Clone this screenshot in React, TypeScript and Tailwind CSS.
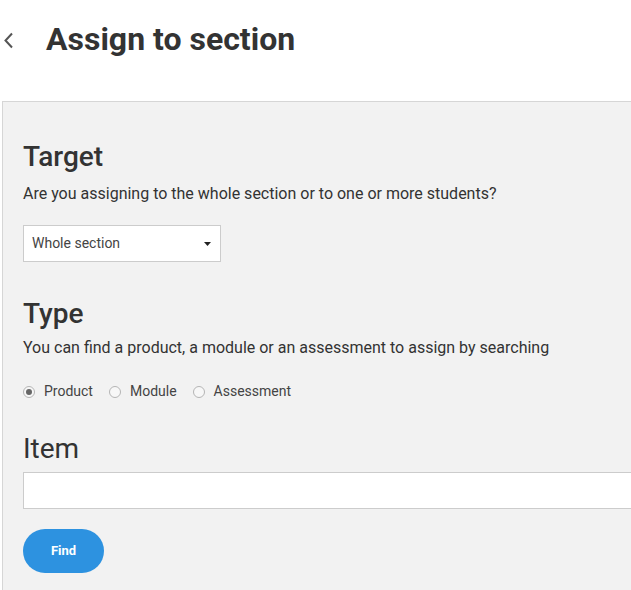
import React, { useState } from "react";

const OPTIONS = ["Product", "Module", "Assessment"];

export default function App() {
  const [type, setType] = useState("Product");

  return (
    <div
      className="min-h-[590px] bg-white text-[#333]"
      style={{ fontFamily: "Roboto, 'Noto Sans', sans-serif" }}
    >
      {/* Header */}
      <div className="flex h-[101px] items-start">
        <button className="ml-[2px] mt-[31px] flex h-[18px] w-[12px] items-center justify-center text-[#555]">
          <svg width="11" height="17" viewBox="0 0 11 17" fill="none">
            <path d="M9 1.5 L2.5 8.5 L9 15.5" stroke="currentColor" strokeWidth="2" />
          </svg>
        </button>
        <h1 className="ml-[32px] mt-[20px] text-[32px] font-bold leading-[38px] text-[#333]">
          Assign to section
        </h1>
      </div>

      {/* Panel */}
      <div className="ml-[2px] border-l border-t border-[#d6d6d6] bg-[#f2f2f2] pb-[20px] pl-[20px]">
        <h2 className="pt-[38px] text-[28px] font-medium leading-[34px] text-[#333]">Target</h2>
        <p className="mt-[10px] text-[16px] leading-[20px] text-[#333]">
          Are you assigning to the whole section or to one or more students?
        </p>
        <div className="mt-[21px] flex h-[37px] w-[198px] items-center justify-between border border-[#ccc] bg-white pl-[8px] pr-[9px]">
          <span className="text-[14px] text-[#444]">Whole section</span>
          <svg width="7" height="4" viewBox="0 0 7 4">
            <path d="M0 0 H7 L3.5 4 Z" fill="#222" />
          </svg>
        </div>

        <h2 className="mt-[35px] text-[28px] font-medium leading-[34px] text-[#333]">Type</h2>
        <p className="mt-[7px] text-[16px] leading-[20px] text-[#333]">
          You can find a product, a module or an assessment to assign by searching
        </p>
        <div className="mt-[23px] flex items-center gap-[16px]">
          {OPTIONS.map((o) => (
            <label
              key={o}
              className="flex cursor-pointer items-center gap-[9px] text-[14px] text-[#444]"
              onClick={() => setType(o)}
            >
              <span className="flex h-[12px] w-[12px] items-center justify-center rounded-full border border-[#b5b5b5] bg-[#f7f7f7]">
                {type === o && <span className="h-[6px] w-[6px] rounded-full bg-[#666]" />}
              </span>
              {o}
            </label>
          ))}
        </div>

        <h2 className="mt-[30px] text-[28px] font-normal leading-[34px] text-[#333]">Item</h2>
        <input
          className="mt-[6px] block h-[37px] w-[calc(100%+2px)] border border-[#ccc] bg-white px-2 text-[14px] outline-none"
          type="text"
        />
        <button className="mt-[20px] h-[44px] w-[81px] rounded-full bg-[#2d92e0] text-[13px] font-bold text-white">
          Find
        </button>
      </div>
    </div>
  );
}
